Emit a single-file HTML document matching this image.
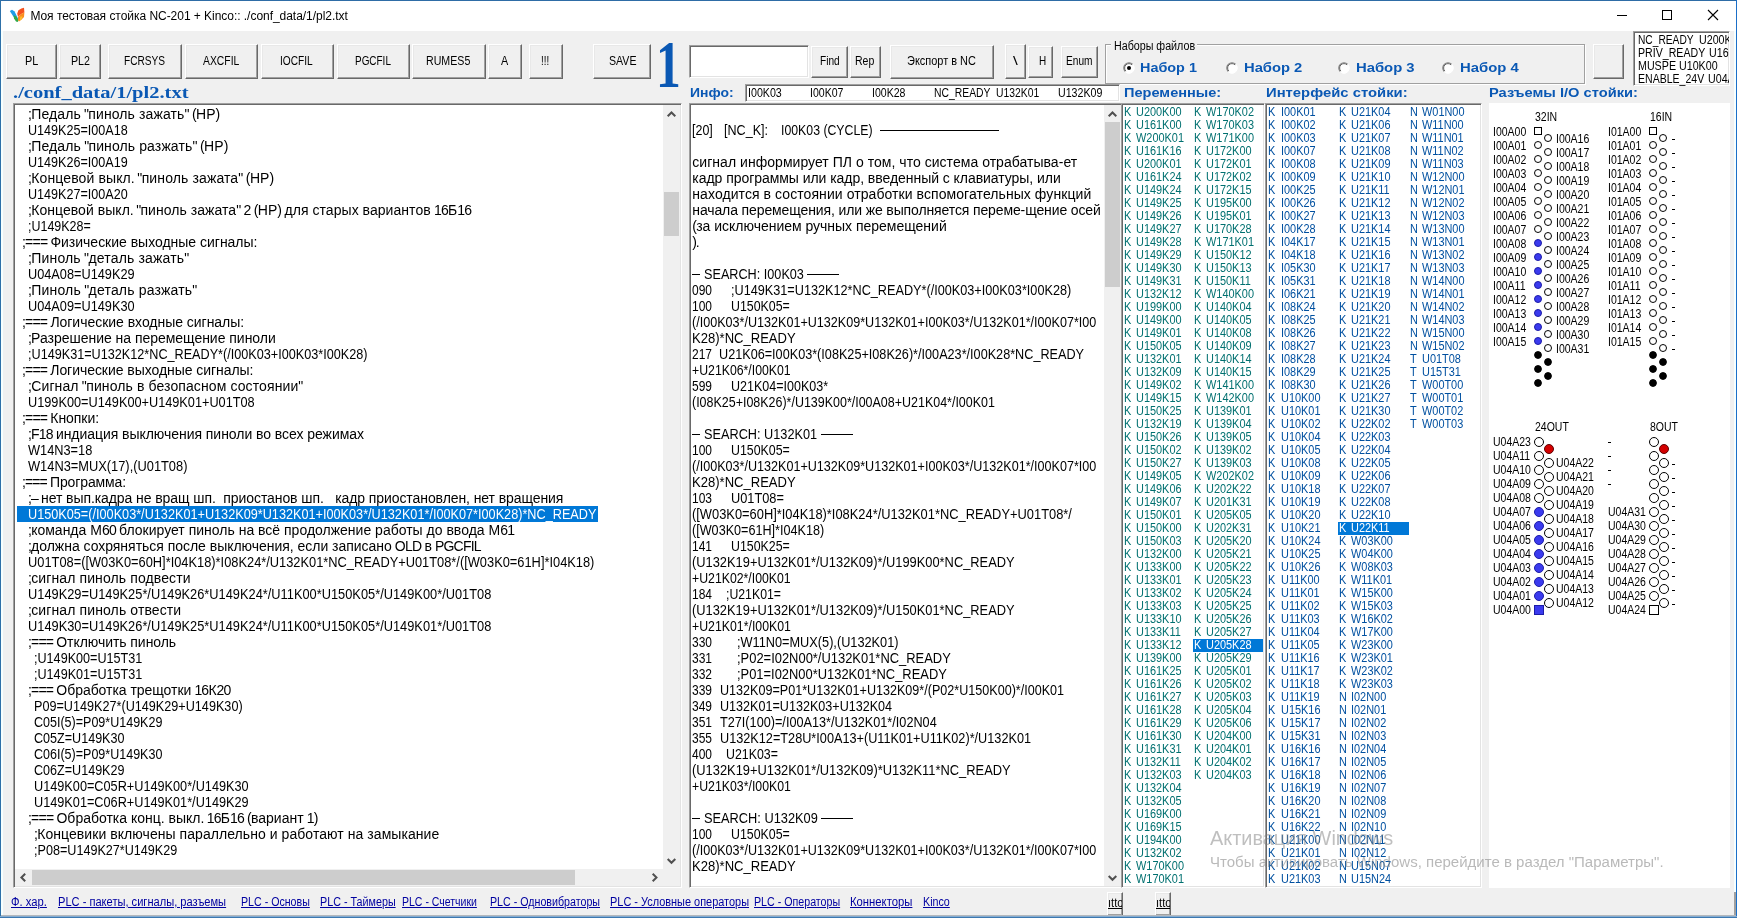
<!DOCTYPE html>
<html lang="ru"><head><meta charset="utf-8"><title>NC-201</title>
<style>
*{box-sizing:border-box;margin:0;padding:0}
html,body{width:1737px;height:919px;overflow:hidden;background:#f0f0f0}
body{position:relative;font-family:"Liberation Sans",sans-serif;font-size:13px;color:#000;
  will-change:transform}
.abs{position:absolute}
#frame{position:absolute;left:0;top:0;width:1737px;height:919px;pointer-events:none;z-index:50}
#titlebar{position:absolute;left:1px;top:1px;width:1735px;height:30px;background:#fff}
.btn{position:absolute;background:#f0f0f0;border:1px solid;border-color:#fff #696969 #696969 #fff;box-shadow:inset -1px -1px 0 #a0a0a0,inset 1px 1px 0 #e8e8e8}
.sunk{position:absolute;background:#fff;border:1px solid;border-color:#a0a0a0 #fff #fff #a0a0a0;box-shadow:inset 1px 1px 0 #696969,inset -1px -1px 0 #e3e3e3}
.blue{color:#0a58b4}
.tx{position:absolute;white-space:pre}
.t{letter-spacing:calc(var(--l,0px) + var(--d,0px))}
.t i{font-style:normal;letter-spacing:calc(var(--c,0px) + var(--d,0px))}
.sx{display:inline-block;transform-origin:0 0;transform:scaleX(var(--s,.89));letter-spacing:0}
.p14{font-size:14px;line-height:16px;height:16px;--l:-.76px;--c:0px}
.p12{font-size:12px;line-height:13px;height:13px;--l:-.8px;--c:-.1px}
.hdr{font-weight:bold;font-size:13.5px;line-height:16px;color:#0a58b4;--s:1.1}
.ttl{font-size:12px;line-height:16px}
.sel{background:#0078d7;color:#fff}
.lk{color:#0000a0}
.lk span{text-decoration:underline}
</style></head>
<body>
<div id="titlebar"></div>
<svg class="abs" style="left:0;top:0" width="32" height="30" viewBox="0 0 32 30">
<path d="M9.8 11 L12 9.8 L14.6 11.6 L18 18.5 L16.8 21 L14 17.5 Z" fill="#1e9be6"/>
<path d="M13.6 15.2 L16.4 16.6 L18.6 20.6 L17.6 21.9 L16 21.6 L14 18.6 Z" fill="#2fa84a"/>
<path d="M17.2 13.6 L18.4 10.2 L21.4 8.4 L24 7.8 L24.4 12.5 L22.4 13.2 L19.4 15.5 L18 17 Z" fill="#f4511e"/>
<path d="M18 17 L19.4 15.5 L22.4 13.2 L24.4 12.5 L24 17 L21.6 19.6 L19 21.4 L18 20 Z" fill="#fb8c1e"/>
<path d="M20.4 16.4 L22.6 16.6 L21.4 19.6 L19.6 20.8 Z" fill="#fdc02f"/>
</svg>
<div class="tx ttl" style="left:30.4px;top:8px;"><span id="title" class="t" style="--d:-0.036px"><i>Моя тестовая стойка</i> NC-201 + Kinco:: ./conf_data/1/pl2.txt</span></div>
<svg class="abs" style="left:1600px;top:1px" width="136" height="30" viewBox="0 0 136 30" shape-rendering="crispEdges">
<rect x="17" y="14" width="10" height="1" fill="#000"/>
<rect x="62.5" y="9.5" width="9" height="9" fill="none" stroke="#000" stroke-width="1"/>
<g shape-rendering="auto" stroke="#000" stroke-width="1.1"><path d="M108 9 L118 19 M118 9 L108 19" fill="none"/></g>
</svg>
<div class="btn" style="left:6px;top:44px;width:51px;height:35px"></div>
<div class="tx p12" style="left:25.0px;top:55px;"><span id="B0" class="sx" style="--s:0.9055">PL</span></div>
<div class="btn" style="left:59px;top:44px;width:42px;height:35px"></div>
<div class="tx p12" style="left:70.5px;top:55px;"><span id="B1" class="sx" style="--s:0.8895">PL2</span></div>
<div class="btn" style="left:108px;top:44px;width:74px;height:35px"></div>
<div class="tx p12" style="left:124.1px;top:55px;"><span id="B2" class="sx" style="--s:0.8443">FCRSYS</span></div>
<div class="btn" style="left:185px;top:44px;width:73px;height:35px"></div>
<div class="tx p12" style="left:202.7px;top:55px;"><span id="B3" class="sx" style="--s:0.8643">AXCFIL</span></div>
<div class="btn" style="left:261px;top:44px;width:73px;height:35px"></div>
<div class="tx p12" style="left:280.0px;top:55px;"><span id="B4" class="sx" style="--s:0.8456">IOCFIL</span></div>
<div class="btn" style="left:337px;top:44px;width:73px;height:35px"></div>
<div class="tx p12" style="left:354.6px;top:55px;"><span id="B5" class="sx" style="--s:0.8284">PGCFIL</span></div>
<div class="btn" style="left:412px;top:44px;width:74px;height:35px"></div>
<div class="tx p12" style="left:426.4px;top:55px;"><span id="B6" class="sx" style="--s:0.8859">RUMES5</span></div>
<div class="btn" style="left:488px;top:44px;width:34px;height:35px"></div>
<div class="tx p12" style="left:501.0px;top:55px;"><span id="B7" class="sx" style="--s:0.8982">A</span></div>
<div class="btn" style="left:529px;top:44px;width:34px;height:35px"></div>
<div class="tx p12" style="left:541.2px;top:55px;"><span id="B8" class="sx" style="--s:0.8100">!!!</span></div>
<div class="btn" style="left:593px;top:44px;width:58px;height:35px"></div>
<div class="tx p12" style="left:608.5px;top:55px;"><span id="B9" class="sx" style="--s:0.8835">SAVE</span></div>
<div class="btn" style="left:811px;top:46px;width:37px;height:32px"></div>
<div class="tx p12" style="left:819.7px;top:55px;"><span id="B10" class="sx" style="--s:0.8444">Find</span></div>
<div class="btn" style="left:850px;top:46px;width:31px;height:32px"></div>
<div class="tx p12" style="left:854.7px;top:55px;"><span id="B11" class="sx" style="--s:0.8772">Rep</span></div>
<div class="btn" style="left:890px;top:45px;width:104px;height:34px"></div>
<div class="tx p12" style="left:906.7px;top:55px;"><span id="B12" class="sx" style="--s:0.9131">Экспорт в NC</span></div>
<div class="btn" style="left:1004.5px;top:44px;width:21.5px;height:35px"></div>
<div class="tx p12" style="left:1012.7px;top:55px;"><span id="B13" class="sx" style="--s:1.4393">\</span></div>
<div class="btn" style="left:1028.4px;top:46px;width:24.59999999999991px;height:32px"></div>
<div class="tx p12" style="left:1038.5px;top:55px;"><span id="B14" class="sx" style="--s:0.8303">H</span></div>
<div class="btn" style="left:1060.6px;top:46px;width:37.200000000000045px;height:32px"></div>
<div class="tx p12" style="left:1065.5px;top:55px;"><span id="B15" class="sx" style="--s:0.8450">Enum</span></div>
<div class="btn" style="left:1593px;top:44px;width:31px;height:35px"></div>
<div class="abs" style="left:655.5px;top:30.5px;font-family:'Liberation Serif',serif;font-weight:bold;font-size:67px;line-height:67px;color:#0a58b4;transform:scaleX(.74);transform-origin:0 0">1</div>
<div class="sunk" style="left:689px;top:45px;width:120px;height:33px"></div>
<div class="abs" style="left:1105px;top:44px;width:480px;height:40px;border:1px solid #a0a0a0;box-shadow:1px 1px 0 #fff, 1px 1px 0 #fff inset"></div>
<div class="abs" style="left:1111px;top:40px;width:86px;height:13px;background:#f0f0f0"></div>
<div class="tx p12" style="left:1113.5px;top:40px;"><span id="grp" class="sx" style="--s:0.8915">Наборы файлов</span></div>
<svg class="abs" style="left:1122.5px;top:62px" width="12" height="12" viewBox="0 0 12 12"><circle cx="6" cy="6" r="5.4" fill="#fff"/><path d="M2.3 9.7 A5.2 5.2 0 0 1 9.7 2.3" fill="none" stroke="#7c7c7c" stroke-width="1.1"/><path d="M2.9 9.1 A4.3 4.3 0 0 1 9.1 2.9" fill="none" stroke="#5a5a5a" stroke-width=".9"/><path d="M9.7 2.3 A5.2 5.2 0 0 1 2.3 9.7" fill="none" stroke="#fff" stroke-width="1"/><circle cx="6" cy="6" r="2" fill="#000"/></svg>
<div class="tx hdr" style="left:1140.3px;top:60px;"><span id="R0" class="sx" style="--s:1.0664">Набор 1</span></div>
<svg class="abs" style="left:1225.5px;top:62px" width="12" height="12" viewBox="0 0 12 12"><circle cx="6" cy="6" r="5.4" fill="#fff"/><path d="M2.3 9.7 A5.2 5.2 0 0 1 9.7 2.3" fill="none" stroke="#7c7c7c" stroke-width="1.1"/><path d="M2.9 9.1 A4.3 4.3 0 0 1 9.1 2.9" fill="none" stroke="#5a5a5a" stroke-width=".9"/><path d="M9.7 2.3 A5.2 5.2 0 0 1 2.3 9.7" fill="none" stroke="#fff" stroke-width="1"/></svg>
<div class="tx hdr" style="left:1244.1px;top:60px;"><span id="R1" class="sx" style="--s:1.0927">Набор 2</span></div>
<svg class="abs" style="left:1337.5px;top:62px" width="12" height="12" viewBox="0 0 12 12"><circle cx="6" cy="6" r="5.4" fill="#fff"/><path d="M2.3 9.7 A5.2 5.2 0 0 1 9.7 2.3" fill="none" stroke="#7c7c7c" stroke-width="1.1"/><path d="M2.9 9.1 A4.3 4.3 0 0 1 9.1 2.9" fill="none" stroke="#5a5a5a" stroke-width=".9"/><path d="M9.7 2.3 A5.2 5.2 0 0 1 2.3 9.7" fill="none" stroke="#fff" stroke-width="1"/></svg>
<div class="tx hdr" style="left:1356.0px;top:60px;"><span id="R2" class="sx" style="--s:1.0982">Набор 3</span></div>
<svg class="abs" style="left:1441.5px;top:62px" width="12" height="12" viewBox="0 0 12 12"><circle cx="6" cy="6" r="5.4" fill="#fff"/><path d="M2.3 9.7 A5.2 5.2 0 0 1 9.7 2.3" fill="none" stroke="#7c7c7c" stroke-width="1.1"/><path d="M2.9 9.1 A4.3 4.3 0 0 1 9.1 2.9" fill="none" stroke="#5a5a5a" stroke-width=".9"/><path d="M9.7 2.3 A5.2 5.2 0 0 1 2.3 9.7" fill="none" stroke="#fff" stroke-width="1"/></svg>
<div class="tx hdr" style="left:1460.1px;top:60px;"><span id="R3" class="sx" style="--s:1.1002">Набор 4</span></div>
<div class="sunk" style="left:1633px;top:31px;width:97px;height:55px"></div>
<div class="abs" style="left:1635px;top:33px;width:93.5px;height:53px;overflow:hidden">
<div class="tx p12" style="left:2.7000000000000455px;top:1px;"><span id="tr0" class="sx" style="--s:0.8509">NC_READY</span></div>
<div class="tx p12" style="left:63.700000000000045px;top:1px;"><span id="tq0" class="sx">U200K00</span></div>
<div class="tx p12" style="left:2.7000000000000455px;top:14px;"><span id="tr1" class="sx" style="--s:0.8840">PRIV_READY</span></div>
<div class="tx p12" style="left:73.5px;top:14px;"><span id="tq1" class="sx">U160K00</span></div>
<div class="tx p12" style="left:2.7000000000000455px;top:27px;"><span id="tr2" class="sx" style="--s:0.8908">MUSPE U10K00</span></div>
<div class="tx p12" style="left:2.7000000000000455px;top:40px;"><span id="tr3" class="sx" style="--s:0.8783">ENABLE_24V</span></div>
<div class="tx p12" style="left:73.0px;top:40px;"><span id="tq3" class="sx">U04A23</span></div>
</div>
<div class="abs" style="left:12.7px;top:81.5px;font-family:'Liberation Serif',serif;font-weight:bold;font-size:16px;line-height:22px;color:#0a58b4;white-space:pre"><span id="fpath" class="sx" style="--s:1.2821">./conf_data/1/pl2.txt</span></div>
<div class="tx hdr" style="left:689.8px;top:85px;"><span id="h0" class="sx" style="--s:1.0324">Инфо:</span></div>
<div class="sunk" style="left:745px;top:84px;width:375px;height:18px"></div>
<div class="tx p12" style="left:748px;top:87px;"><span id="inf0" class="sx" style="--s:0.8884">I00K03</span></div>
<div class="tx p12" style="left:810px;top:87px;"><span id="inf1" class="sx" style="--s:0.8779">I00K07</span></div>
<div class="tx p12" style="left:872px;top:87px;"><span id="inf2" class="sx" style="--s:0.8805">I00K28</span></div>
<div class="tx p12" style="left:934px;top:87px;"><span id="inf3" class="sx" style="--s:0.8645">NC_READY</span></div>
<div class="tx p12" style="left:995.8px;top:87px;"><span id="inf4" class="sx" style="--s:0.8633">U132K01</span></div>
<div class="tx p12" style="left:1057.8px;top:87px;"><span id="inf5" class="sx" style="--s:0.8872">U132K09</span></div>
<div class="tx hdr" style="left:1123.8px;top:85px;"><span id="h1" class="sx" style="--s:1.0785">Переменные:</span></div>
<div class="tx hdr" style="left:1265.7px;top:85px;"><span id="h2" class="sx" style="--s:1.0980">Интерфейс стойки:</span></div>
<div class="tx hdr" style="left:1489.4px;top:85px;"><span id="h3" class="sx" style="--s:1.0861">Разъемы I/O стойки:</span></div>
<div class="sunk" style="left:13px;top:103px;width:669px;height:785px"></div>
<div class="tx p14" style="left:28px;top:106px;"><span id="L0" class="t" style="--d:0.100px">;<i>Педаль</i> "<i>пиноль зажать</i>" (<i>НР</i>)</span></div>
<div class="tx p14" style="left:28px;top:122px;"><span id="L1" class="sx" style="--s:0.8987">U149K25=I00A18</span></div>
<div class="tx p14" style="left:28px;top:138px;"><span id="L2" class="t" style="--d:0.113px">;<i>Педаль</i> "<i>пиноль разжать</i>" (<i>НР</i>)</span></div>
<div class="tx p14" style="left:28px;top:154px;"><span id="L3" class="sx" style="--s:0.8987">U149K26=I00A19</span></div>
<div class="tx p14" style="left:28px;top:170px;"><span id="L4" class="t" style="--d:0.118px">;<i>Концевой выкл</i>. "<i>пиноль зажата</i>" (<i>НР</i>)</span></div>
<div class="tx p14" style="left:28px;top:186px;"><span id="L5" class="sx" style="--s:0.8987">U149K27=I00A20</span></div>
<div class="tx p14" style="left:28px;top:202px;"><span id="L6" class="t" style="--d:0.048px">;<i>Концевой выкл</i>. "<i>пиноль зажата</i>" 2 (<i>НР</i>) <i>для старых вариантов</i> 16<i>Б</i>16</span></div>
<div class="tx p14" style="left:28px;top:218px;"><span id="L7" class="sx" style="--s:0.8900">;U149K28=</span></div>
<div class="tx p14" style="left:22px;top:234px;"><span id="L8" class="t" style="--d:-0.015px">;=== <i>Физические выходные сигналы</i>:</span></div>
<div class="tx p14" style="left:28px;top:250px;"><span id="L9" class="t" style="--d:0.161px">;<i>Пиноль</i> "<i>деталь зажать</i>"</span></div>
<div class="tx p14" style="left:28px;top:266px;"><span id="L10" class="sx" style="--s:0.9099">U04A08=U149K29</span></div>
<div class="tx p14" style="left:28px;top:282px;"><span id="L11" class="t" style="--d:0.174px">;<i>Пиноль</i> "<i>деталь разжать</i>"</span></div>
<div class="tx p14" style="left:28px;top:298px;"><span id="L12" class="sx" style="--s:0.9099">U04A09=U149K30</span></div>
<div class="tx p14" style="left:22px;top:314px;"><span id="L13" class="t" style="--d:-0.029px">;=== <i>Логические входные сигналы</i>:</span></div>
<div class="tx p14" style="left:28px;top:330px;"><span id="L14" class="t" style="--d:-0.027px">;<i>Разрешение на перемещение пиноли</i></span></div>
<div class="tx p14" style="left:28px;top:346px;"><span id="L15" class="sx" style="--s:0.9031">;U149K31=U132K12*NC_READY*(/I00K03+I00K03*I00K28)</span></div>
<div class="tx p14" style="left:22px;top:362px;"><span id="L16" class="t" style="--d:-0.052px">;=== <i>Логические выходные сигналы</i>:</span></div>
<div class="tx p14" style="left:28px;top:378px;"><span id="L17" class="t" style="--d:0.108px">;<i>Сигнал</i> "<i>пиноль в безопасном состоянии</i>"</span></div>
<div class="tx p14" style="left:28px;top:394px;"><span id="L18" class="sx" style="--s:0.9087">U199K00=U149K00+U149K01+U01T08</span></div>
<div class="tx p14" style="left:22px;top:410px;"><span id="L19" class="t" style="--d:-0.047px">;=== <i>Кнопки</i>:</span></div>
<div class="tx p14" style="left:28px;top:426px;"><span id="L20" class="t" style="--d:-0.046px">;F18 <i>индиация выключения пиноли во всех режимах</i></span></div>
<div class="tx p14" style="left:28px;top:442px;"><span id="L21" class="sx" style="--s:0.9129">W14N3=18</span></div>
<div class="tx p14" style="left:28px;top:458px;"><span id="L22" class="sx" style="--s:0.9167">W14N3=MUX(17),(U01T08)</span></div>
<div class="tx p14" style="left:22px;top:474px;"><span id="L23" class="t" style="--d:-0.114px">;=== <i>Программа</i>:</span></div>
<div class="tx p14" style="left:28px;top:490px;"><span id="L24" class="t" style="--d:-0.082px">;– <i>нет вып.кадра не вращ шп.  приостанов шп.   кадр приостановлен, нет вращения</i></span></div>
<div class="abs sel" style="left:17px;top:506px;width:581px;height:16px"></div>
<div class="tx p14" style="left:28px;top:506px;color:#fff;"><span id="L25" class="sx" style="--s:0.9055">U150K05=(/I00K03*/U132K01+U132K09*U132K01+I00K03*/U132K01*/I00K07*I00K28)*NC_READY</span></div>
<div class="tx p14" style="left:28px;top:522px;"><span id="L26" class="t" style="--d:0.003px">;<i>команда М</i>60 <i>блокирует пиноль на всё продолжение работы до ввода М</i>61</span></div>
<div class="tx p14" style="left:28px;top:538px;"><span id="L27" class="t" style="--d:-0.027px">;<i>должна сохряняться после выключения, если записано</i> OLD <i>в</i> PGCFIL</span></div>
<div class="tx p14" style="left:28px;top:554px;"><span id="L28" class="sx" style="--s:0.9166">U01T08=([W03K0=60H]*I04K18)*I08K24*/U132K01*NC_READY+U01T08*/([W03K0=61H]*I04K18)</span></div>
<div class="tx p14" style="left:28px;top:570px;"><span id="L29" class="t" style="--d:0.107px">;<i>сигнал пиноль подвести</i></span></div>
<div class="tx p14" style="left:28px;top:586px;"><span id="L30" class="sx" style="--s:0.9155">U149K29=U149K25*/U149K26*U149K24*/U11K00*U150K05*/U149K00*/U01T08</span></div>
<div class="tx p14" style="left:28px;top:602px;"><span id="L31" class="t" style="--d:0.114px">;<i>сигнал пиноль отвести</i></span></div>
<div class="tx p14" style="left:28px;top:618px;"><span id="L32" class="sx" style="--s:0.9155">U149K30=U149K26*/U149K25*U149K24*/U11K00*U150K05*/U149K01*/U01T08</span></div>
<div class="tx p14" style="left:28px;top:634px;"><span id="L33" class="t" style="--d:-0.055px">;=== <i>Отключить пиноль</i></span></div>
<div class="tx p14" style="left:34px;top:650px;"><span id="L34" class="sx" style="--s:0.9005">;U149K00=U15T31</span></div>
<div class="tx p14" style="left:34px;top:666px;"><span id="L35" class="sx" style="--s:0.9005">;U149K01=U15T31</span></div>
<div class="tx p14" style="left:28px;top:682px;"><span id="L36" class="t" style="--d:-0.039px">;=== <i>Обработка трещотки</i> 16<i>К</i>20</span></div>
<div class="tx p14" style="left:34px;top:698px;"><span id="L37" class="sx" style="--s:0.9024">P09=U149K27*(U149K29+U149K30)</span></div>
<div class="tx p14" style="left:34px;top:714px;"><span id="L38" class="sx" style="--s:0.8941">C05I(5)=P09*U149K29</span></div>
<div class="tx p14" style="left:34px;top:730px;"><span id="L39" class="sx" style="--s:0.8978">C05Z=U149K30</span></div>
<div class="tx p14" style="left:34px;top:746px;"><span id="L40" class="sx" style="--s:0.8941">C06I(5)=P09*U149K30</span></div>
<div class="tx p14" style="left:34px;top:762px;"><span id="L41" class="sx" style="--s:0.8978">C06Z=U149K29</span></div>
<div class="tx p14" style="left:34px;top:778px;"><span id="L42" class="sx" style="--s:0.9069">U149K00=C05R+U149K00*/U149K30</span></div>
<div class="tx p14" style="left:34px;top:794px;"><span id="L43" class="sx" style="--s:0.9069">U149K01=C06R+U149K01*/U149K29</span></div>
<div class="tx p14" style="left:28px;top:810px;"><span id="L44" class="t" style="--d:-0.005px">;=== <i>Обработка конц. выкл</i>. 16<i>Б</i>16 (<i>вариант</i> 1)</span></div>
<div class="tx p14" style="left:34px;top:826px;"><span id="L45" class="t" style="--d:0.059px">;<i>Концевики включены параллельно и работают на замыкание</i></span></div>
<div class="tx p14" style="left:34px;top:842px;"><span id="L46" class="sx" style="--s:0.9002">;P08=U149K27*U149K29</span></div>
<div class="abs" style="left:663px;top:105px;width:17px;height:764px;background:#f0f0f0"></div>
<div class="abs" style="left:664px;top:192px;width:15px;height:44px;background:#cdcdcd"></div>
<svg class="abs" style="left:663px;top:105px" width="17" height="17" viewBox="0 0 17 17"><path d="M4.7 11.3 L8.5 7.5 L12.3 11.3" fill="none" stroke="#505050" stroke-width="2"/></svg>
<svg class="abs" style="left:663px;top:852px" width="17" height="17" viewBox="0 0 17 17"><path d="M4.7 7 L8.5 10.8 L12.3 7" fill="none" stroke="#505050" stroke-width="2"/></svg>
<div class="abs" style="left:15px;top:869px;width:665px;height:17px;background:#f0f0f0"></div>
<div class="abs" style="left:32px;top:870px;width:543px;height:15px;background:#cdcdcd"></div>
<svg class="abs" style="left:15px;top:869px" width="17" height="17" viewBox="0 0 17 17"><path d="M10.2 4.7 L6.4 8.5 L10.2 12.3" fill="none" stroke="#505050" stroke-width="2"/></svg>
<svg class="abs" style="left:646px;top:869px" width="17" height="17" viewBox="0 0 17 17"><path d="M6.7 4.7 L10.5 8.5 L6.7 12.3" fill="none" stroke="#505050" stroke-width="2"/></svg>
<div class="sunk" style="left:689px;top:103px;width:433px;height:785px"></div>
<div class="tx p14" style="left:692.3px;top:122px;"><span id="M1p" class="sx">[20]</span></div>
<div class="tx p14" style="left:723.5px;top:122px;"><span id="M1" class="sx" style="--s:0.8977">[NC_K]:</span></div>
<div class="tx p14" style="left:780.8px;top:122px;"><span id="M1b" class="sx" style="--s:0.8784">I00K03 (CYCLE)</span></div>
<div class="abs" style="left:880px;top:130px;width:119px;height:1px;background:#000"></div>
<div class="tx p14" style="left:692.3px;top:154px;"><span id="M3" class="t" style="--d:0.037px"><i>сигнал информирует ПЛ о том, что система отрабатыва-ет</i></span></div>
<div class="tx p14" style="left:692.3px;top:170px;"><span id="M4" class="t" style="--d:-0.047px"><i>кадр программы или кадр, введенный с клавиатуры, или</i></span></div>
<div class="tx p14" style="left:692.3px;top:186px;"><span id="M5" class="t" style="--d:0.075px"><i>находится в состоянии отработки вспомогательных функций</i></span></div>
<div class="tx p14" style="left:692.3px;top:202px;"><span id="M6" class="t" style="--d:-0.120px"><i>начала перемещения, или же выполняется переме-щение осей</i></span></div>
<div class="tx p14" style="left:692.3px;top:218px;"><span id="M7" class="t" style="--d:-0.014px">(<i>за исключением ручных перемещений</i></span></div>
<div class="tx p14" style="left:692.3px;top:234px;"><span id="M8" class="t" style="--d:-0.570px">).</span></div>
<div class="abs" style="left:692px;top:274px;width:8px;height:1px;background:#000"></div>
<div class="tx p14" style="left:703.5px;top:266px;"><span id="M10" class="sx" style="--s:0.9041">SEARCH: I00K03</span></div>
<div class="abs" style="left:807px;top:274px;width:32px;height:1px;background:#000"></div>
<div class="tx p14" style="left:692.3px;top:282px;"><span id="M11p" class="sx" style="--s:0.8563">090</span></div>
<div class="tx p14" style="left:730.5px;top:282px;"><span id="M11" class="sx" style="--s:0.9050">;U149K31=U132K12*NC_READY*(/I00K03+I00K03*I00K28)</span></div>
<div class="tx p14" style="left:692.3px;top:298px;"><span id="M12p" class="sx" style="--s:0.8563">100</span></div>
<div class="tx p14" style="left:731.4px;top:298px;"><span id="M12" class="sx" style="--s:0.8835">U150K05=</span></div>
<div class="tx p14" style="left:692.3px;top:314px;"><span id="M13" class="sx" style="--s:0.8986">(/I00K03*/U132K01+U132K09*U132K01+I00K03*/U132K01*/I00K07*I00</span></div>
<div class="tx p14" style="left:692.3px;top:330px;"><span id="M14" class="sx" style="--s:0.9320">K28)*NC_READY</span></div>
<div class="tx p14" style="left:692.3px;top:346px;"><span id="M15p" class="sx" style="--s:0.8563">217</span></div>
<div class="tx p14" style="left:719.0px;top:346px;"><span id="M15" class="sx" style="--s:0.9036">U21K06=I00K03*(I08K25+I08K26)*/I00A23*/I00K28*NC_READY</span></div>
<div class="tx p14" style="left:692.3px;top:362px;"><span id="M16" class="sx" style="--s:0.8775">+U21K06*/I00K01</span></div>
<div class="tx p14" style="left:692.3px;top:378px;"><span id="M17p" class="sx" style="--s:0.8563">599</span></div>
<div class="tx p14" style="left:731.4px;top:378px;"><span id="M17" class="sx" style="--s:0.8933">U21K04=I00K03*</span></div>
<div class="tx p14" style="left:692.3px;top:394px;"><span id="M18" class="sx" style="--s:0.8905">(I08K25+I08K26)*/U139K00*/I00A08+U21K04*/I00K01</span></div>
<div class="abs" style="left:692px;top:434px;width:8px;height:1px;background:#000"></div>
<div class="tx p14" style="left:703.5px;top:426px;"><span id="M20" class="sx" style="--s:0.9083">SEARCH: U132K01</span></div>
<div class="abs" style="left:821px;top:434px;width:32px;height:1px;background:#000"></div>
<div class="tx p14" style="left:692.3px;top:442px;"><span id="M21p" class="sx" style="--s:0.8563">100</span></div>
<div class="tx p14" style="left:731.4px;top:442px;"><span id="M21" class="sx" style="--s:0.8835">U150K05=</span></div>
<div class="tx p14" style="left:692.3px;top:458px;"><span id="M22" class="sx" style="--s:0.8986">(/I00K03*/U132K01+U132K09*U132K01+I00K03*/U132K01*/I00K07*I00</span></div>
<div class="tx p14" style="left:692.3px;top:474px;"><span id="M23" class="sx" style="--s:0.9320">K28)*NC_READY</span></div>
<div class="tx p14" style="left:692.3px;top:490px;"><span id="M24p" class="sx" style="--s:0.8563">103</span></div>
<div class="tx p14" style="left:731.4px;top:490px;"><span id="M24" class="sx" style="--s:0.9125">U01T08=</span></div>
<div class="tx p14" style="left:692.3px;top:506px;"><span id="M25" class="sx" style="--s:0.9193">([W03K0=60H]*I04K18)*I08K24*/U132K01*NC_READY+U01T08*/</span></div>
<div class="tx p14" style="left:692.3px;top:522px;"><span id="M26" class="sx" style="--s:0.9012">([W03K0=61H]*I04K18)</span></div>
<div class="tx p14" style="left:692.3px;top:538px;"><span id="M27p" class="sx" style="--s:0.8563">141</span></div>
<div class="tx p14" style="left:731.4px;top:538px;"><span id="M27" class="sx" style="--s:0.8835">U150K25=</span></div>
<div class="tx p14" style="left:692.3px;top:554px;"><span id="M28" class="sx" style="--s:0.9181">(U132K19+U132K01*/U132K09)*/U199K00*NC_READY</span></div>
<div class="tx p14" style="left:692.3px;top:570px;"><span id="M29" class="sx" style="--s:0.8775">+U21K02*/I00K01</span></div>
<div class="tx p14" style="left:692.3px;top:586px;"><span id="M30p" class="sx" style="--s:0.8563">184</span></div>
<div class="tx p14" style="left:725.5px;top:586px;"><span id="M30" class="sx" style="--s:0.8776">;U21K01=</span></div>
<div class="tx p14" style="left:692.3px;top:602px;"><span id="M31" class="sx" style="--s:0.9181">(U132K19+U132K01*/U132K09)*/U150K01*NC_READY</span></div>
<div class="tx p14" style="left:692.3px;top:618px;"><span id="M32" class="sx" style="--s:0.8793">+U21K01*/I00K01</span></div>
<div class="tx p14" style="left:692.3px;top:634px;"><span id="M33p" class="sx" style="--s:0.8563">330</span></div>
<div class="tx p14" style="left:736.9px;top:634px;"><span id="M33" class="sx" style="--s:0.9098">;W11N0=MUX(5),(U132K01)</span></div>
<div class="tx p14" style="left:692.3px;top:650px;"><span id="M34p" class="sx" style="--s:0.8563">331</span></div>
<div class="tx p14" style="left:736.9px;top:650px;"><span id="M34" class="sx" style="--s:0.9235">;P02=I02N00*/U132K01*NC_READY</span></div>
<div class="tx p14" style="left:692.3px;top:666px;"><span id="M35p" class="sx" style="--s:0.8563">332</span></div>
<div class="tx p14" style="left:736.9px;top:666px;"><span id="M35" class="sx" style="--s:0.9217">;P01=I02N00*U132K01*NC_READY</span></div>
<div class="tx p14" style="left:692.3px;top:682px;"><span id="M36p" class="sx" style="--s:0.8563">339</span></div>
<div class="tx p14" style="left:719.7px;top:682px;"><span id="M36" class="sx" style="--s:0.8985">U132K09=P01*U132K01+U132K09*/(P02*U150K00)*/I00K01</span></div>
<div class="tx p14" style="left:692.3px;top:698px;"><span id="M37p" class="sx" style="--s:0.8563">349</span></div>
<div class="tx p14" style="left:719.7px;top:698px;"><span id="M37" class="sx" style="--s:0.8988">U132K01=U132K03+U132K04</span></div>
<div class="tx p14" style="left:692.3px;top:714px;"><span id="M38p" class="sx" style="--s:0.8563">351</span></div>
<div class="tx p14" style="left:719.7px;top:714px;"><span id="M38" class="sx" style="--s:0.9054">T27I(100)=/I00A13*/U132K01*/I02N04</span></div>
<div class="tx p14" style="left:692.3px;top:730px;"><span id="M39p" class="sx" style="--s:0.8563">355</span></div>
<div class="tx p14" style="left:719.7px;top:730px;"><span id="M39" class="sx" style="--s:0.9065">U132K12=T28U*I00A13+(U11K01+U11K02)*/U132K01</span></div>
<div class="tx p14" style="left:692.3px;top:746px;"><span id="M40p" class="sx" style="--s:0.8563">400</span></div>
<div class="tx p14" style="left:725.7px;top:746px;"><span id="M40" class="sx" style="--s:0.8831">U21K03=</span></div>
<div class="tx p14" style="left:692.3px;top:762px;"><span id="M41" class="sx" style="--s:0.9196">(U132K19+U132K01*/U132K09)*U132K11*NC_READY</span></div>
<div class="tx p14" style="left:692.3px;top:778px;"><span id="M42" class="sx" style="--s:0.8793">+U21K03*/I00K01</span></div>
<div class="abs" style="left:692px;top:818px;width:8px;height:1px;background:#000"></div>
<div class="tx p14" style="left:703.5px;top:810px;"><span id="M44" class="sx" style="--s:0.9139">SEARCH: U132K09</span></div>
<div class="abs" style="left:821px;top:818px;width:32px;height:1px;background:#000"></div>
<div class="tx p14" style="left:692.3px;top:826px;"><span id="M45p" class="sx" style="--s:0.8563">100</span></div>
<div class="tx p14" style="left:731.4px;top:826px;"><span id="M45" class="sx" style="--s:0.8835">U150K05=</span></div>
<div class="tx p14" style="left:692.3px;top:842px;"><span id="M46" class="sx" style="--s:0.8986">(/I00K03*/U132K01+U132K09*U132K01+I00K03*/U132K01*/I00K07*I00</span></div>
<div class="tx p14" style="left:692.3px;top:858px;"><span id="M47" class="sx" style="--s:0.9320">K28)*NC_READY</span></div>
<div class="abs" style="left:1104px;top:105px;width:17px;height:781px;background:#f0f0f0"></div>
<div class="abs" style="left:1105px;top:122px;width:15px;height:165px;background:#cdcdcd"></div>
<svg class="abs" style="left:1104px;top:105px" width="17" height="17" viewBox="0 0 17 17"><path d="M4.7 11.3 L8.5 7.5 L12.3 11.3" fill="none" stroke="#505050" stroke-width="2"/></svg>
<svg class="abs" style="left:1104px;top:869px" width="17" height="17" viewBox="0 0 17 17"><path d="M4.7 7 L8.5 10.8 L12.3 7" fill="none" stroke="#505050" stroke-width="2"/></svg>
<div class="sunk" style="left:1121px;top:103px;width:144px;height:785px"></div>
<div class="p12" style="color:#007070;--s:.91"><div class="tx sx" style="left:1124px;top:106px">K</div><div class="tx sx" style="left:1136px;top:106px">U200K00</div><div class="tx sx" style="left:1124px;top:119px">K</div><div class="tx sx" style="left:1136px;top:119px">U161K00</div><div class="tx sx" style="left:1124px;top:132px">K</div><div class="tx sx" style="left:1136px;top:132px">W200K01</div><div class="tx sx" style="left:1124px;top:145px">K</div><div class="tx sx" style="left:1136px;top:145px">U161K16</div><div class="tx sx" style="left:1124px;top:158px">K</div><div class="tx sx" style="left:1136px;top:158px">U200K01</div><div class="tx sx" style="left:1124px;top:171px">K</div><div class="tx sx" style="left:1136px;top:171px">U161K24</div><div class="tx sx" style="left:1124px;top:184px">K</div><div class="tx sx" style="left:1136px;top:184px">U149K24</div><div class="tx sx" style="left:1124px;top:197px">K</div><div class="tx sx" style="left:1136px;top:197px">U149K25</div><div class="tx sx" style="left:1124px;top:210px">K</div><div class="tx sx" style="left:1136px;top:210px">U149K26</div><div class="tx sx" style="left:1124px;top:223px">K</div><div class="tx sx" style="left:1136px;top:223px">U149K27</div><div class="tx sx" style="left:1124px;top:236px">K</div><div class="tx sx" style="left:1136px;top:236px">U149K28</div><div class="tx sx" style="left:1124px;top:249px">K</div><div class="tx sx" style="left:1136px;top:249px">U149K29</div><div class="tx sx" style="left:1124px;top:262px">K</div><div class="tx sx" style="left:1136px;top:262px">U149K30</div><div class="tx sx" style="left:1124px;top:275px">K</div><div class="tx sx" style="left:1136px;top:275px">U149K31</div><div class="tx sx" style="left:1124px;top:288px">K</div><div class="tx sx" style="left:1136px;top:288px">U132K12</div><div class="tx sx" style="left:1124px;top:301px">K</div><div class="tx sx" style="left:1136px;top:301px">U199K00</div><div class="tx sx" style="left:1124px;top:314px">K</div><div class="tx sx" style="left:1136px;top:314px">U149K00</div><div class="tx sx" style="left:1124px;top:327px">K</div><div class="tx sx" style="left:1136px;top:327px">U149K01</div><div class="tx sx" style="left:1124px;top:340px">K</div><div class="tx sx" style="left:1136px;top:340px">U150K05</div><div class="tx sx" style="left:1124px;top:353px">K</div><div class="tx sx" style="left:1136px;top:353px">U132K01</div><div class="tx sx" style="left:1124px;top:366px">K</div><div class="tx sx" style="left:1136px;top:366px">U132K09</div><div class="tx sx" style="left:1124px;top:379px">K</div><div class="tx sx" style="left:1136px;top:379px">U149K02</div><div class="tx sx" style="left:1124px;top:392px">K</div><div class="tx sx" style="left:1136px;top:392px">U149K15</div><div class="tx sx" style="left:1124px;top:405px">K</div><div class="tx sx" style="left:1136px;top:405px">U150K25</div><div class="tx sx" style="left:1124px;top:418px">K</div><div class="tx sx" style="left:1136px;top:418px">U132K19</div><div class="tx sx" style="left:1124px;top:431px">K</div><div class="tx sx" style="left:1136px;top:431px">U150K26</div><div class="tx sx" style="left:1124px;top:444px">K</div><div class="tx sx" style="left:1136px;top:444px">U150K02</div><div class="tx sx" style="left:1124px;top:457px">K</div><div class="tx sx" style="left:1136px;top:457px">U150K27</div><div class="tx sx" style="left:1124px;top:470px">K</div><div class="tx sx" style="left:1136px;top:470px">U149K05</div><div class="tx sx" style="left:1124px;top:483px">K</div><div class="tx sx" style="left:1136px;top:483px">U149K06</div><div class="tx sx" style="left:1124px;top:496px">K</div><div class="tx sx" style="left:1136px;top:496px">U149K07</div><div class="tx sx" style="left:1124px;top:509px">K</div><div class="tx sx" style="left:1136px;top:509px">U150K01</div><div class="tx sx" style="left:1124px;top:522px">K</div><div class="tx sx" style="left:1136px;top:522px">U150K00</div><div class="tx sx" style="left:1124px;top:535px">K</div><div class="tx sx" style="left:1136px;top:535px">U150K03</div><div class="tx sx" style="left:1124px;top:548px">K</div><div class="tx sx" style="left:1136px;top:548px">U132K00</div><div class="tx sx" style="left:1124px;top:561px">K</div><div class="tx sx" style="left:1136px;top:561px">U133K00</div><div class="tx sx" style="left:1124px;top:574px">K</div><div class="tx sx" style="left:1136px;top:574px">U133K01</div><div class="tx sx" style="left:1124px;top:587px">K</div><div class="tx sx" style="left:1136px;top:587px">U133K02</div><div class="tx sx" style="left:1124px;top:600px">K</div><div class="tx sx" style="left:1136px;top:600px">U133K03</div><div class="tx sx" style="left:1124px;top:613px">K</div><div class="tx sx" style="left:1136px;top:613px">U133K10</div><div class="tx sx" style="left:1124px;top:626px">K</div><div class="tx sx" style="left:1136px;top:626px">U133K11</div><div class="tx sx" style="left:1124px;top:639px">K</div><div class="tx sx" style="left:1136px;top:639px">U133K12</div><div class="tx sx" style="left:1124px;top:652px">K</div><div class="tx sx" style="left:1136px;top:652px">U139K00</div><div class="tx sx" style="left:1124px;top:665px">K</div><div class="tx sx" style="left:1136px;top:665px">U161K25</div><div class="tx sx" style="left:1124px;top:678px">K</div><div class="tx sx" style="left:1136px;top:678px">U161K26</div><div class="tx sx" style="left:1124px;top:691px">K</div><div class="tx sx" style="left:1136px;top:691px">U161K27</div><div class="tx sx" style="left:1124px;top:704px">K</div><div class="tx sx" style="left:1136px;top:704px">U161K28</div><div class="tx sx" style="left:1124px;top:717px">K</div><div class="tx sx" style="left:1136px;top:717px">U161K29</div><div class="tx sx" style="left:1124px;top:730px">K</div><div class="tx sx" style="left:1136px;top:730px">U161K30</div><div class="tx sx" style="left:1124px;top:743px">K</div><div class="tx sx" style="left:1136px;top:743px">U161K31</div><div class="tx sx" style="left:1124px;top:756px">K</div><div class="tx sx" style="left:1136px;top:756px">U132K11</div><div class="tx sx" style="left:1124px;top:769px">K</div><div class="tx sx" style="left:1136px;top:769px">U132K03</div><div class="tx sx" style="left:1124px;top:782px">K</div><div class="tx sx" style="left:1136px;top:782px">U132K04</div><div class="tx sx" style="left:1124px;top:795px">K</div><div class="tx sx" style="left:1136px;top:795px">U132K05</div><div class="tx sx" style="left:1124px;top:808px">K</div><div class="tx sx" style="left:1136px;top:808px">U169K00</div><div class="tx sx" style="left:1124px;top:821px">K</div><div class="tx sx" style="left:1136px;top:821px">U169K15</div><div class="tx sx" style="left:1124px;top:834px">K</div><div class="tx sx" style="left:1136px;top:834px">U194K00</div><div class="tx sx" style="left:1124px;top:847px">K</div><div class="tx sx" style="left:1136px;top:847px">U132K02</div><div class="tx sx" style="left:1124px;top:860px">K</div><div class="tx sx" style="left:1136px;top:860px">W170K00</div><div class="tx sx" style="left:1124px;top:873px">K</div><div class="tx sx" style="left:1136px;top:873px">W170K01</div></div>
<div class="p12" style="color:#007070;--s:.91"><div class="tx sx" style="left:1194px;top:106px">K</div><div class="tx sx" style="left:1206px;top:106px">W170K02</div><div class="tx sx" style="left:1194px;top:119px">K</div><div class="tx sx" style="left:1206px;top:119px">W170K03</div><div class="tx sx" style="left:1194px;top:132px">K</div><div class="tx sx" style="left:1206px;top:132px">W171K00</div><div class="tx sx" style="left:1194px;top:145px">K</div><div class="tx sx" style="left:1206px;top:145px">U172K00</div><div class="tx sx" style="left:1194px;top:158px">K</div><div class="tx sx" style="left:1206px;top:158px">U172K01</div><div class="tx sx" style="left:1194px;top:171px">K</div><div class="tx sx" style="left:1206px;top:171px">U172K02</div><div class="tx sx" style="left:1194px;top:184px">K</div><div class="tx sx" style="left:1206px;top:184px">U172K15</div><div class="tx sx" style="left:1194px;top:197px">K</div><div class="tx sx" style="left:1206px;top:197px">U195K00</div><div class="tx sx" style="left:1194px;top:210px">K</div><div class="tx sx" style="left:1206px;top:210px">U195K01</div><div class="tx sx" style="left:1194px;top:223px">K</div><div class="tx sx" style="left:1206px;top:223px">U170K28</div><div class="tx sx" style="left:1194px;top:236px">K</div><div class="tx sx" style="left:1206px;top:236px">W171K01</div><div class="tx sx" style="left:1194px;top:249px">K</div><div class="tx sx" style="left:1206px;top:249px">U150K12</div><div class="tx sx" style="left:1194px;top:262px">K</div><div class="tx sx" style="left:1206px;top:262px">U150K13</div><div class="tx sx" style="left:1194px;top:275px">K</div><div class="tx sx" style="left:1206px;top:275px">U150K11</div><div class="tx sx" style="left:1194px;top:288px">K</div><div class="tx sx" style="left:1206px;top:288px">W140K00</div><div class="tx sx" style="left:1194px;top:301px">K</div><div class="tx sx" style="left:1206px;top:301px">U140K04</div><div class="tx sx" style="left:1194px;top:314px">K</div><div class="tx sx" style="left:1206px;top:314px">U140K05</div><div class="tx sx" style="left:1194px;top:327px">K</div><div class="tx sx" style="left:1206px;top:327px">U140K08</div><div class="tx sx" style="left:1194px;top:340px">K</div><div class="tx sx" style="left:1206px;top:340px">U140K09</div><div class="tx sx" style="left:1194px;top:353px">K</div><div class="tx sx" style="left:1206px;top:353px">U140K14</div><div class="tx sx" style="left:1194px;top:366px">K</div><div class="tx sx" style="left:1206px;top:366px">U140K15</div><div class="tx sx" style="left:1194px;top:379px">K</div><div class="tx sx" style="left:1206px;top:379px">W141K00</div><div class="tx sx" style="left:1194px;top:392px">K</div><div class="tx sx" style="left:1206px;top:392px">W142K00</div><div class="tx sx" style="left:1194px;top:405px">K</div><div class="tx sx" style="left:1206px;top:405px">U139K01</div><div class="tx sx" style="left:1194px;top:418px">K</div><div class="tx sx" style="left:1206px;top:418px">U139K04</div><div class="tx sx" style="left:1194px;top:431px">K</div><div class="tx sx" style="left:1206px;top:431px">U139K05</div><div class="tx sx" style="left:1194px;top:444px">K</div><div class="tx sx" style="left:1206px;top:444px">U139K02</div><div class="tx sx" style="left:1194px;top:457px">K</div><div class="tx sx" style="left:1206px;top:457px">U139K03</div><div class="tx sx" style="left:1194px;top:470px">K</div><div class="tx sx" style="left:1206px;top:470px">W202K02</div><div class="tx sx" style="left:1194px;top:483px">K</div><div class="tx sx" style="left:1206px;top:483px">U202K22</div><div class="tx sx" style="left:1194px;top:496px">K</div><div class="tx sx" style="left:1206px;top:496px">U201K31</div><div class="tx sx" style="left:1194px;top:509px">K</div><div class="tx sx" style="left:1206px;top:509px">U205K05</div><div class="tx sx" style="left:1194px;top:522px">K</div><div class="tx sx" style="left:1206px;top:522px">U202K31</div><div class="tx sx" style="left:1194px;top:535px">K</div><div class="tx sx" style="left:1206px;top:535px">U205K20</div><div class="tx sx" style="left:1194px;top:548px">K</div><div class="tx sx" style="left:1206px;top:548px">U205K21</div><div class="tx sx" style="left:1194px;top:561px">K</div><div class="tx sx" style="left:1206px;top:561px">U205K22</div><div class="tx sx" style="left:1194px;top:574px">K</div><div class="tx sx" style="left:1206px;top:574px">U205K23</div><div class="tx sx" style="left:1194px;top:587px">K</div><div class="tx sx" style="left:1206px;top:587px">U205K24</div><div class="tx sx" style="left:1194px;top:600px">K</div><div class="tx sx" style="left:1206px;top:600px">U205K25</div><div class="tx sx" style="left:1194px;top:613px">K</div><div class="tx sx" style="left:1206px;top:613px">U205K26</div><div class="tx sx" style="left:1194px;top:626px">K</div><div class="tx sx" style="left:1206px;top:626px">U205K27</div><div class="abs sel" style="left:1193px;top:639px;width:70px;height:13px"></div><div class="tx sx" style="left:1194px;top:639px;color:#fff">K</div><div class="tx sx" style="left:1206px;top:639px;color:#fff">U205K28</div><div class="tx sx" style="left:1194px;top:652px">K</div><div class="tx sx" style="left:1206px;top:652px">U205K29</div><div class="tx sx" style="left:1194px;top:665px">K</div><div class="tx sx" style="left:1206px;top:665px">U205K01</div><div class="tx sx" style="left:1194px;top:678px">K</div><div class="tx sx" style="left:1206px;top:678px">U205K02</div><div class="tx sx" style="left:1194px;top:691px">K</div><div class="tx sx" style="left:1206px;top:691px">U205K03</div><div class="tx sx" style="left:1194px;top:704px">K</div><div class="tx sx" style="left:1206px;top:704px">U205K04</div><div class="tx sx" style="left:1194px;top:717px">K</div><div class="tx sx" style="left:1206px;top:717px">U205K06</div><div class="tx sx" style="left:1194px;top:730px">K</div><div class="tx sx" style="left:1206px;top:730px">U204K00</div><div class="tx sx" style="left:1194px;top:743px">K</div><div class="tx sx" style="left:1206px;top:743px">U204K01</div><div class="tx sx" style="left:1194px;top:756px">K</div><div class="tx sx" style="left:1206px;top:756px">U204K02</div><div class="tx sx" style="left:1194px;top:769px">K</div><div class="tx sx" style="left:1206px;top:769px">U204K03</div></div>
<div class="sunk" style="left:1265px;top:103px;width:217px;height:785px"></div>
<div class="p12" style="color:#0050a0;--s:.91"><div class="tx sx" style="left:1268px;top:106px">K</div><div class="tx sx" style="left:1281px;top:106px">I00K01</div><div class="tx sx" style="left:1268px;top:119px">K</div><div class="tx sx" style="left:1281px;top:119px">I00K02</div><div class="tx sx" style="left:1268px;top:132px">K</div><div class="tx sx" style="left:1281px;top:132px">I00K03</div><div class="tx sx" style="left:1268px;top:145px">K</div><div class="tx sx" style="left:1281px;top:145px">I00K07</div><div class="tx sx" style="left:1268px;top:158px">K</div><div class="tx sx" style="left:1281px;top:158px">I00K08</div><div class="tx sx" style="left:1268px;top:171px">K</div><div class="tx sx" style="left:1281px;top:171px">I00K09</div><div class="tx sx" style="left:1268px;top:184px">K</div><div class="tx sx" style="left:1281px;top:184px">I00K25</div><div class="tx sx" style="left:1268px;top:197px">K</div><div class="tx sx" style="left:1281px;top:197px">I00K26</div><div class="tx sx" style="left:1268px;top:210px">K</div><div class="tx sx" style="left:1281px;top:210px">I00K27</div><div class="tx sx" style="left:1268px;top:223px">K</div><div class="tx sx" style="left:1281px;top:223px">I00K28</div><div class="tx sx" style="left:1268px;top:236px">K</div><div class="tx sx" style="left:1281px;top:236px">I04K17</div><div class="tx sx" style="left:1268px;top:249px">K</div><div class="tx sx" style="left:1281px;top:249px">I04K18</div><div class="tx sx" style="left:1268px;top:262px">K</div><div class="tx sx" style="left:1281px;top:262px">I05K30</div><div class="tx sx" style="left:1268px;top:275px">K</div><div class="tx sx" style="left:1281px;top:275px">I05K31</div><div class="tx sx" style="left:1268px;top:288px">K</div><div class="tx sx" style="left:1281px;top:288px">I06K21</div><div class="tx sx" style="left:1268px;top:301px">K</div><div class="tx sx" style="left:1281px;top:301px">I08K24</div><div class="tx sx" style="left:1268px;top:314px">K</div><div class="tx sx" style="left:1281px;top:314px">I08K25</div><div class="tx sx" style="left:1268px;top:327px">K</div><div class="tx sx" style="left:1281px;top:327px">I08K26</div><div class="tx sx" style="left:1268px;top:340px">K</div><div class="tx sx" style="left:1281px;top:340px">I08K27</div><div class="tx sx" style="left:1268px;top:353px">K</div><div class="tx sx" style="left:1281px;top:353px">I08K28</div><div class="tx sx" style="left:1268px;top:366px">K</div><div class="tx sx" style="left:1281px;top:366px">I08K29</div><div class="tx sx" style="left:1268px;top:379px">K</div><div class="tx sx" style="left:1281px;top:379px">I08K30</div><div class="tx sx" style="left:1268px;top:392px">K</div><div class="tx sx" style="left:1281px;top:392px">U10K00</div><div class="tx sx" style="left:1268px;top:405px">K</div><div class="tx sx" style="left:1281px;top:405px">U10K01</div><div class="tx sx" style="left:1268px;top:418px">K</div><div class="tx sx" style="left:1281px;top:418px">U10K02</div><div class="tx sx" style="left:1268px;top:431px">K</div><div class="tx sx" style="left:1281px;top:431px">U10K04</div><div class="tx sx" style="left:1268px;top:444px">K</div><div class="tx sx" style="left:1281px;top:444px">U10K05</div><div class="tx sx" style="left:1268px;top:457px">K</div><div class="tx sx" style="left:1281px;top:457px">U10K08</div><div class="tx sx" style="left:1268px;top:470px">K</div><div class="tx sx" style="left:1281px;top:470px">U10K09</div><div class="tx sx" style="left:1268px;top:483px">K</div><div class="tx sx" style="left:1281px;top:483px">U10K18</div><div class="tx sx" style="left:1268px;top:496px">K</div><div class="tx sx" style="left:1281px;top:496px">U10K19</div><div class="tx sx" style="left:1268px;top:509px">K</div><div class="tx sx" style="left:1281px;top:509px">U10K20</div><div class="tx sx" style="left:1268px;top:522px">K</div><div class="tx sx" style="left:1281px;top:522px">U10K21</div><div class="tx sx" style="left:1268px;top:535px">K</div><div class="tx sx" style="left:1281px;top:535px">U10K24</div><div class="tx sx" style="left:1268px;top:548px">K</div><div class="tx sx" style="left:1281px;top:548px">U10K25</div><div class="tx sx" style="left:1268px;top:561px">K</div><div class="tx sx" style="left:1281px;top:561px">U10K26</div><div class="tx sx" style="left:1268px;top:574px">K</div><div class="tx sx" style="left:1281px;top:574px">U11K00</div><div class="tx sx" style="left:1268px;top:587px">K</div><div class="tx sx" style="left:1281px;top:587px">U11K01</div><div class="tx sx" style="left:1268px;top:600px">K</div><div class="tx sx" style="left:1281px;top:600px">U11K02</div><div class="tx sx" style="left:1268px;top:613px">K</div><div class="tx sx" style="left:1281px;top:613px">U11K03</div><div class="tx sx" style="left:1268px;top:626px">K</div><div class="tx sx" style="left:1281px;top:626px">U11K04</div><div class="tx sx" style="left:1268px;top:639px">K</div><div class="tx sx" style="left:1281px;top:639px">U11K05</div><div class="tx sx" style="left:1268px;top:652px">K</div><div class="tx sx" style="left:1281px;top:652px">U11K16</div><div class="tx sx" style="left:1268px;top:665px">K</div><div class="tx sx" style="left:1281px;top:665px">U11K17</div><div class="tx sx" style="left:1268px;top:678px">K</div><div class="tx sx" style="left:1281px;top:678px">U11K18</div><div class="tx sx" style="left:1268px;top:691px">K</div><div class="tx sx" style="left:1281px;top:691px">U11K19</div><div class="tx sx" style="left:1268px;top:704px">K</div><div class="tx sx" style="left:1281px;top:704px">U15K16</div><div class="tx sx" style="left:1268px;top:717px">K</div><div class="tx sx" style="left:1281px;top:717px">U15K17</div><div class="tx sx" style="left:1268px;top:730px">K</div><div class="tx sx" style="left:1281px;top:730px">U15K31</div><div class="tx sx" style="left:1268px;top:743px">K</div><div class="tx sx" style="left:1281px;top:743px">U16K16</div><div class="tx sx" style="left:1268px;top:756px">K</div><div class="tx sx" style="left:1281px;top:756px">U16K17</div><div class="tx sx" style="left:1268px;top:769px">K</div><div class="tx sx" style="left:1281px;top:769px">U16K18</div><div class="tx sx" style="left:1268px;top:782px">K</div><div class="tx sx" style="left:1281px;top:782px">U16K19</div><div class="tx sx" style="left:1268px;top:795px">K</div><div class="tx sx" style="left:1281px;top:795px">U16K20</div><div class="tx sx" style="left:1268px;top:808px">K</div><div class="tx sx" style="left:1281px;top:808px">U16K21</div><div class="tx sx" style="left:1268px;top:821px">K</div><div class="tx sx" style="left:1281px;top:821px">U16K22</div><div class="tx sx" style="left:1268px;top:834px">K</div><div class="tx sx" style="left:1281px;top:834px">U21K00</div><div class="tx sx" style="left:1268px;top:847px">K</div><div class="tx sx" style="left:1281px;top:847px">U21K01</div><div class="tx sx" style="left:1268px;top:860px">K</div><div class="tx sx" style="left:1281px;top:860px">U21K02</div><div class="tx sx" style="left:1268px;top:873px">K</div><div class="tx sx" style="left:1281px;top:873px">U21K03</div></div>
<div class="p12" style="color:#0050a0;--s:.91"><div class="tx sx" style="left:1339px;top:106px">K</div><div class="tx sx" style="left:1351px;top:106px">U21K04</div><div class="tx sx" style="left:1339px;top:119px">K</div><div class="tx sx" style="left:1351px;top:119px">U21K06</div><div class="tx sx" style="left:1339px;top:132px">K</div><div class="tx sx" style="left:1351px;top:132px">U21K07</div><div class="tx sx" style="left:1339px;top:145px">K</div><div class="tx sx" style="left:1351px;top:145px">U21K08</div><div class="tx sx" style="left:1339px;top:158px">K</div><div class="tx sx" style="left:1351px;top:158px">U21K09</div><div class="tx sx" style="left:1339px;top:171px">K</div><div class="tx sx" style="left:1351px;top:171px">U21K10</div><div class="tx sx" style="left:1339px;top:184px">K</div><div class="tx sx" style="left:1351px;top:184px">U21K11</div><div class="tx sx" style="left:1339px;top:197px">K</div><div class="tx sx" style="left:1351px;top:197px">U21K12</div><div class="tx sx" style="left:1339px;top:210px">K</div><div class="tx sx" style="left:1351px;top:210px">U21K13</div><div class="tx sx" style="left:1339px;top:223px">K</div><div class="tx sx" style="left:1351px;top:223px">U21K14</div><div class="tx sx" style="left:1339px;top:236px">K</div><div class="tx sx" style="left:1351px;top:236px">U21K15</div><div class="tx sx" style="left:1339px;top:249px">K</div><div class="tx sx" style="left:1351px;top:249px">U21K16</div><div class="tx sx" style="left:1339px;top:262px">K</div><div class="tx sx" style="left:1351px;top:262px">U21K17</div><div class="tx sx" style="left:1339px;top:275px">K</div><div class="tx sx" style="left:1351px;top:275px">U21K18</div><div class="tx sx" style="left:1339px;top:288px">K</div><div class="tx sx" style="left:1351px;top:288px">U21K19</div><div class="tx sx" style="left:1339px;top:301px">K</div><div class="tx sx" style="left:1351px;top:301px">U21K20</div><div class="tx sx" style="left:1339px;top:314px">K</div><div class="tx sx" style="left:1351px;top:314px">U21K21</div><div class="tx sx" style="left:1339px;top:327px">K</div><div class="tx sx" style="left:1351px;top:327px">U21K22</div><div class="tx sx" style="left:1339px;top:340px">K</div><div class="tx sx" style="left:1351px;top:340px">U21K23</div><div class="tx sx" style="left:1339px;top:353px">K</div><div class="tx sx" style="left:1351px;top:353px">U21K24</div><div class="tx sx" style="left:1339px;top:366px">K</div><div class="tx sx" style="left:1351px;top:366px">U21K25</div><div class="tx sx" style="left:1339px;top:379px">K</div><div class="tx sx" style="left:1351px;top:379px">U21K26</div><div class="tx sx" style="left:1339px;top:392px">K</div><div class="tx sx" style="left:1351px;top:392px">U21K27</div><div class="tx sx" style="left:1339px;top:405px">K</div><div class="tx sx" style="left:1351px;top:405px">U21K30</div><div class="tx sx" style="left:1339px;top:418px">K</div><div class="tx sx" style="left:1351px;top:418px">U22K02</div><div class="tx sx" style="left:1339px;top:431px">K</div><div class="tx sx" style="left:1351px;top:431px">U22K03</div><div class="tx sx" style="left:1339px;top:444px">K</div><div class="tx sx" style="left:1351px;top:444px">U22K04</div><div class="tx sx" style="left:1339px;top:457px">K</div><div class="tx sx" style="left:1351px;top:457px">U22K05</div><div class="tx sx" style="left:1339px;top:470px">K</div><div class="tx sx" style="left:1351px;top:470px">U22K06</div><div class="tx sx" style="left:1339px;top:483px">K</div><div class="tx sx" style="left:1351px;top:483px">U22K07</div><div class="tx sx" style="left:1339px;top:496px">K</div><div class="tx sx" style="left:1351px;top:496px">U22K08</div><div class="tx sx" style="left:1339px;top:509px">K</div><div class="tx sx" style="left:1351px;top:509px">U22K10</div><div class="abs sel" style="left:1338px;top:522px;width:71px;height:13px"></div><div class="tx sx" style="left:1339px;top:522px;color:#fff">K</div><div class="tx sx" style="left:1351px;top:522px;color:#fff">U22K11</div><div class="tx sx" style="left:1339px;top:535px">K</div><div class="tx sx" style="left:1351px;top:535px">W03K00</div><div class="tx sx" style="left:1339px;top:548px">K</div><div class="tx sx" style="left:1351px;top:548px">W04K00</div><div class="tx sx" style="left:1339px;top:561px">K</div><div class="tx sx" style="left:1351px;top:561px">W08K03</div><div class="tx sx" style="left:1339px;top:574px">K</div><div class="tx sx" style="left:1351px;top:574px">W11K01</div><div class="tx sx" style="left:1339px;top:587px">K</div><div class="tx sx" style="left:1351px;top:587px">W15K00</div><div class="tx sx" style="left:1339px;top:600px">K</div><div class="tx sx" style="left:1351px;top:600px">W15K03</div><div class="tx sx" style="left:1339px;top:613px">K</div><div class="tx sx" style="left:1351px;top:613px">W16K02</div><div class="tx sx" style="left:1339px;top:626px">K</div><div class="tx sx" style="left:1351px;top:626px">W17K00</div><div class="tx sx" style="left:1339px;top:639px">K</div><div class="tx sx" style="left:1351px;top:639px">W23K00</div><div class="tx sx" style="left:1339px;top:652px">K</div><div class="tx sx" style="left:1351px;top:652px">W23K01</div><div class="tx sx" style="left:1339px;top:665px">K</div><div class="tx sx" style="left:1351px;top:665px">W23K02</div><div class="tx sx" style="left:1339px;top:678px">K</div><div class="tx sx" style="left:1351px;top:678px">W23K03</div><div class="tx sx" style="left:1339px;top:691px">N</div><div class="tx sx" style="left:1351px;top:691px">I02N00</div><div class="tx sx" style="left:1339px;top:704px">N</div><div class="tx sx" style="left:1351px;top:704px">I02N01</div><div class="tx sx" style="left:1339px;top:717px">N</div><div class="tx sx" style="left:1351px;top:717px">I02N02</div><div class="tx sx" style="left:1339px;top:730px">N</div><div class="tx sx" style="left:1351px;top:730px">I02N03</div><div class="tx sx" style="left:1339px;top:743px">N</div><div class="tx sx" style="left:1351px;top:743px">I02N04</div><div class="tx sx" style="left:1339px;top:756px">N</div><div class="tx sx" style="left:1351px;top:756px">I02N05</div><div class="tx sx" style="left:1339px;top:769px">N</div><div class="tx sx" style="left:1351px;top:769px">I02N06</div><div class="tx sx" style="left:1339px;top:782px">N</div><div class="tx sx" style="left:1351px;top:782px">I02N07</div><div class="tx sx" style="left:1339px;top:795px">N</div><div class="tx sx" style="left:1351px;top:795px">I02N08</div><div class="tx sx" style="left:1339px;top:808px">N</div><div class="tx sx" style="left:1351px;top:808px">I02N09</div><div class="tx sx" style="left:1339px;top:821px">N</div><div class="tx sx" style="left:1351px;top:821px">I02N10</div><div class="tx sx" style="left:1339px;top:834px">N</div><div class="tx sx" style="left:1351px;top:834px">I02N11</div><div class="tx sx" style="left:1339px;top:847px">N</div><div class="tx sx" style="left:1351px;top:847px">I02N12</div><div class="tx sx" style="left:1339px;top:860px">N</div><div class="tx sx" style="left:1351px;top:860px">U15N07</div><div class="tx sx" style="left:1339px;top:873px">N</div><div class="tx sx" style="left:1351px;top:873px">U15N24</div></div>
<div class="p12" style="color:#0050a0;--s:.91"><div class="tx sx" style="left:1410px;top:106px">N</div><div class="tx sx" style="left:1422px;top:106px">W01N00</div><div class="tx sx" style="left:1410px;top:119px">N</div><div class="tx sx" style="left:1422px;top:119px">W11N00</div><div class="tx sx" style="left:1410px;top:132px">N</div><div class="tx sx" style="left:1422px;top:132px">W11N01</div><div class="tx sx" style="left:1410px;top:145px">N</div><div class="tx sx" style="left:1422px;top:145px">W11N02</div><div class="tx sx" style="left:1410px;top:158px">N</div><div class="tx sx" style="left:1422px;top:158px">W11N03</div><div class="tx sx" style="left:1410px;top:171px">N</div><div class="tx sx" style="left:1422px;top:171px">W12N00</div><div class="tx sx" style="left:1410px;top:184px">N</div><div class="tx sx" style="left:1422px;top:184px">W12N01</div><div class="tx sx" style="left:1410px;top:197px">N</div><div class="tx sx" style="left:1422px;top:197px">W12N02</div><div class="tx sx" style="left:1410px;top:210px">N</div><div class="tx sx" style="left:1422px;top:210px">W12N03</div><div class="tx sx" style="left:1410px;top:223px">N</div><div class="tx sx" style="left:1422px;top:223px">W13N00</div><div class="tx sx" style="left:1410px;top:236px">N</div><div class="tx sx" style="left:1422px;top:236px">W13N01</div><div class="tx sx" style="left:1410px;top:249px">N</div><div class="tx sx" style="left:1422px;top:249px">W13N02</div><div class="tx sx" style="left:1410px;top:262px">N</div><div class="tx sx" style="left:1422px;top:262px">W13N03</div><div class="tx sx" style="left:1410px;top:275px">N</div><div class="tx sx" style="left:1422px;top:275px">W14N00</div><div class="tx sx" style="left:1410px;top:288px">N</div><div class="tx sx" style="left:1422px;top:288px">W14N01</div><div class="tx sx" style="left:1410px;top:301px">N</div><div class="tx sx" style="left:1422px;top:301px">W14N02</div><div class="tx sx" style="left:1410px;top:314px">N</div><div class="tx sx" style="left:1422px;top:314px">W14N03</div><div class="tx sx" style="left:1410px;top:327px">N</div><div class="tx sx" style="left:1422px;top:327px">W15N00</div><div class="tx sx" style="left:1410px;top:340px">N</div><div class="tx sx" style="left:1422px;top:340px">W15N02</div><div class="tx sx" style="left:1410px;top:353px">T</div><div class="tx sx" style="left:1422px;top:353px">U01T08</div><div class="tx sx" style="left:1410px;top:366px">T</div><div class="tx sx" style="left:1422px;top:366px">U15T31</div><div class="tx sx" style="left:1410px;top:379px">T</div><div class="tx sx" style="left:1422px;top:379px">W00T00</div><div class="tx sx" style="left:1410px;top:392px">T</div><div class="tx sx" style="left:1422px;top:392px">W00T01</div><div class="tx sx" style="left:1410px;top:405px">T</div><div class="tx sx" style="left:1422px;top:405px">W00T02</div><div class="tx sx" style="left:1410px;top:418px">T</div><div class="tx sx" style="left:1422px;top:418px">W00T03</div></div>
<div class="abs" style="left:1489px;top:103px;width:241px;height:785px;background:#fff"></div>
<div class="p12" style="--s:.875"><div class="tx sx" style="left:1535px;top:110.5px">32IN</div><div class="tx sx" style="left:1492.7px;top:125.5px">I00A00</div><div class="tx sx" style="left:1556.4px;top:132.5px">I00A16</div><div class="tx sx" style="left:1492.7px;top:139.5px">I00A01</div><div class="tx sx" style="left:1556.4px;top:146.5px">I00A17</div><div class="tx sx" style="left:1492.7px;top:153.5px">I00A02</div><div class="tx sx" style="left:1556.4px;top:160.5px">I00A18</div><div class="tx sx" style="left:1492.7px;top:167.5px">I00A03</div><div class="tx sx" style="left:1556.4px;top:174.5px">I00A19</div><div class="tx sx" style="left:1492.7px;top:181.5px">I00A04</div><div class="tx sx" style="left:1556.4px;top:188.5px">I00A20</div><div class="tx sx" style="left:1492.7px;top:195.5px">I00A05</div><div class="tx sx" style="left:1556.4px;top:202.5px">I00A21</div><div class="tx sx" style="left:1492.7px;top:209.5px">I00A06</div><div class="tx sx" style="left:1556.4px;top:216.5px">I00A22</div><div class="tx sx" style="left:1492.7px;top:223.5px">I00A07</div><div class="tx sx" style="left:1556.4px;top:230.5px">I00A23</div><div class="tx sx" style="left:1492.7px;top:237.5px">I00A08</div><div class="tx sx" style="left:1556.4px;top:244.5px">I00A24</div><div class="tx sx" style="left:1492.7px;top:251.5px">I00A09</div><div class="tx sx" style="left:1556.4px;top:258.5px">I00A25</div><div class="tx sx" style="left:1492.7px;top:265.5px">I00A10</div><div class="tx sx" style="left:1556.4px;top:272.5px">I00A26</div><div class="tx sx" style="left:1492.7px;top:279.5px">I00A11</div><div class="tx sx" style="left:1556.4px;top:286.5px">I00A27</div><div class="tx sx" style="left:1492.7px;top:293.5px">I00A12</div><div class="tx sx" style="left:1556.4px;top:300.5px">I00A28</div><div class="tx sx" style="left:1492.7px;top:307.5px">I00A13</div><div class="tx sx" style="left:1556.4px;top:314.5px">I00A29</div><div class="tx sx" style="left:1492.7px;top:321.5px">I00A14</div><div class="tx sx" style="left:1556.4px;top:328.5px">I00A30</div><div class="tx sx" style="left:1492.7px;top:335.5px">I00A15</div><div class="tx sx" style="left:1556.4px;top:342.5px">I00A31</div><div class="tx sx" style="left:1650px;top:110.5px">16IN</div><div class="tx sx" style="left:1607.7px;top:125.5px">I01A00</div><div class="tx sx" style="left:1607.7px;top:139.5px">I01A01</div><div class="tx sx" style="left:1607.7px;top:153.5px">I01A02</div><div class="tx sx" style="left:1607.7px;top:167.5px">I01A03</div><div class="tx sx" style="left:1607.7px;top:181.5px">I01A04</div><div class="tx sx" style="left:1607.7px;top:195.5px">I01A05</div><div class="tx sx" style="left:1607.7px;top:209.5px">I01A06</div><div class="tx sx" style="left:1607.7px;top:223.5px">I01A07</div><div class="tx sx" style="left:1607.7px;top:237.5px">I01A08</div><div class="tx sx" style="left:1607.7px;top:251.5px">I01A09</div><div class="tx sx" style="left:1607.7px;top:265.5px">I01A10</div><div class="tx sx" style="left:1607.7px;top:279.5px">I01A11</div><div class="tx sx" style="left:1607.7px;top:293.5px">I01A12</div><div class="tx sx" style="left:1607.7px;top:307.5px">I01A13</div><div class="tx sx" style="left:1607.7px;top:321.5px">I01A14</div><div class="tx sx" style="left:1607.7px;top:335.5px">I01A15</div><div class="tx sx" style="left:1535px;top:420.5px">24OUT</div><div class="tx sx" style="left:1492.8px;top:435.5px">U04A23</div><div class="tx sx" style="left:1492.8px;top:449.5px">U04A11</div><div class="tx sx" style="left:1492.8px;top:463.5px">U04A10</div><div class="tx sx" style="left:1492.8px;top:477.5px">U04A09</div><div class="tx sx" style="left:1492.8px;top:491.5px">U04A08</div><div class="tx sx" style="left:1492.8px;top:505.5px">U04A07</div><div class="tx sx" style="left:1492.8px;top:519.5px">U04A06</div><div class="tx sx" style="left:1492.8px;top:533.5px">U04A05</div><div class="tx sx" style="left:1492.8px;top:547.5px">U04A04</div><div class="tx sx" style="left:1492.8px;top:561.5px">U04A03</div><div class="tx sx" style="left:1492.8px;top:575.5px">U04A02</div><div class="tx sx" style="left:1492.8px;top:589.5px">U04A01</div><div class="tx sx" style="left:1492.8px;top:603.5px">U04A00</div><div class="tx sx" style="left:1556.4px;top:456.5px">U04A22</div><div class="tx sx" style="left:1556.4px;top:470.5px">U04A21</div><div class="tx sx" style="left:1556.4px;top:484.5px">U04A20</div><div class="tx sx" style="left:1556.4px;top:498.5px">U04A19</div><div class="tx sx" style="left:1556.4px;top:512.5px">U04A18</div><div class="tx sx" style="left:1556.4px;top:526.5px">U04A17</div><div class="tx sx" style="left:1556.4px;top:540.5px">U04A16</div><div class="tx sx" style="left:1556.4px;top:554.5px">U04A15</div><div class="tx sx" style="left:1556.4px;top:568.5px">U04A14</div><div class="tx sx" style="left:1556.4px;top:582.5px">U04A13</div><div class="tx sx" style="left:1556.4px;top:596.5px">U04A12</div><div class="tx sx" style="left:1650px;top:420.5px">8OUT</div><div class="tx sx" style="left:1607.8px;top:505.5px">U04A31</div><div class="tx sx" style="left:1607.8px;top:519.5px">U04A30</div><div class="tx sx" style="left:1607.8px;top:533.5px">U04A29</div><div class="tx sx" style="left:1607.8px;top:547.5px">U04A28</div><div class="tx sx" style="left:1607.8px;top:561.5px">U04A27</div><div class="tx sx" style="left:1607.8px;top:575.5px">U04A26</div><div class="tx sx" style="left:1607.8px;top:589.5px">U04A25</div><div class="tx sx" style="left:1607.8px;top:603.5px">U04A24</div></div>
<svg class="abs" style="left:0;top:0" width="1737" height="919" viewBox="0 0 1737 919"><rect x="1534.5" y="127.5" width="7" height="7" fill="#fff" stroke="#000" shape-rendering="crispEdges"/><circle cx="1548" cy="138" r="3.5" fill="#fff" stroke="#000"/><circle cx="1538" cy="145" r="3.5" fill="#fff" stroke="#000"/><circle cx="1548" cy="152" r="3.5" fill="#fff" stroke="#000"/><circle cx="1538" cy="159" r="3.5" fill="#fff" stroke="#000"/><circle cx="1548" cy="166" r="3.5" fill="#fff" stroke="#000"/><circle cx="1538" cy="173" r="3.5" fill="#fff" stroke="#000"/><circle cx="1548" cy="180" r="3.5" fill="#fff" stroke="#000"/><circle cx="1538" cy="187" r="3.5" fill="#fff" stroke="#000"/><circle cx="1548" cy="194" r="3.5" fill="#fff" stroke="#000"/><circle cx="1538" cy="201" r="3.5" fill="#fff" stroke="#000"/><circle cx="1548" cy="208" r="3.5" fill="#fff" stroke="#000"/><circle cx="1538" cy="215" r="3.5" fill="#fff" stroke="#000"/><circle cx="1548" cy="222" r="3.5" fill="#fff" stroke="#000"/><circle cx="1538" cy="229" r="3.5" fill="#fff" stroke="#000"/><circle cx="1548" cy="236" r="3.5" fill="#fff" stroke="#000"/><circle cx="1538" cy="243" r="3.5" fill="#3a3aee" stroke="#1c1ca8"/><circle cx="1548" cy="250" r="3.5" fill="#fff" stroke="#000"/><circle cx="1538" cy="257" r="3.5" fill="#3a3aee" stroke="#1c1ca8"/><circle cx="1548" cy="264" r="3.5" fill="#fff" stroke="#000"/><circle cx="1538" cy="271" r="3.5" fill="#3a3aee" stroke="#1c1ca8"/><circle cx="1548" cy="278" r="3.5" fill="#fff" stroke="#000"/><circle cx="1538" cy="285" r="3.5" fill="#3a3aee" stroke="#1c1ca8"/><circle cx="1548" cy="292" r="3.5" fill="#fff" stroke="#000"/><circle cx="1538" cy="299" r="3.5" fill="#3a3aee" stroke="#1c1ca8"/><circle cx="1548" cy="306" r="3.5" fill="#fff" stroke="#000"/><circle cx="1538" cy="313" r="3.5" fill="#3a3aee" stroke="#1c1ca8"/><circle cx="1548" cy="320" r="3.5" fill="#fff" stroke="#000"/><circle cx="1538" cy="327" r="3.5" fill="#3a3aee" stroke="#1c1ca8"/><circle cx="1548" cy="334" r="3.5" fill="#fff" stroke="#000"/><circle cx="1538" cy="341" r="3.5" fill="#3a3aee" stroke="#1c1ca8"/><circle cx="1548" cy="348" r="3.5" fill="#fff" stroke="#000"/><circle cx="1538" cy="355" r="3.4" fill="#000" stroke="#000"/><circle cx="1538" cy="369" r="3.4" fill="#000" stroke="#000"/><circle cx="1538" cy="383" r="3.4" fill="#000" stroke="#000"/><circle cx="1548" cy="362" r="3.4" fill="#000" stroke="#000"/><circle cx="1548" cy="376" r="3.4" fill="#000" stroke="#000"/><rect x="1672" y="139" width="3" height="1" fill="#000" shape-rendering="crispEdges"/><rect x="1649.5" y="127.5" width="7" height="7" fill="#fff" stroke="#000" shape-rendering="crispEdges"/><circle cx="1663" cy="138" r="3.5" fill="#fff" stroke="#000"/><rect x="1672" y="153" width="3" height="1" fill="#000" shape-rendering="crispEdges"/><circle cx="1653" cy="145" r="3.5" fill="#fff" stroke="#000"/><circle cx="1663" cy="152" r="3.5" fill="#fff" stroke="#000"/><rect x="1672" y="167" width="3" height="1" fill="#000" shape-rendering="crispEdges"/><circle cx="1653" cy="159" r="3.5" fill="#fff" stroke="#000"/><circle cx="1663" cy="166" r="3.5" fill="#fff" stroke="#000"/><rect x="1672" y="181" width="3" height="1" fill="#000" shape-rendering="crispEdges"/><circle cx="1653" cy="173" r="3.5" fill="#fff" stroke="#000"/><circle cx="1663" cy="180" r="3.5" fill="#fff" stroke="#000"/><rect x="1672" y="195" width="3" height="1" fill="#000" shape-rendering="crispEdges"/><circle cx="1653" cy="187" r="3.5" fill="#fff" stroke="#000"/><circle cx="1663" cy="194" r="3.5" fill="#fff" stroke="#000"/><rect x="1672" y="209" width="3" height="1" fill="#000" shape-rendering="crispEdges"/><circle cx="1653" cy="201" r="3.5" fill="#fff" stroke="#000"/><circle cx="1663" cy="208" r="3.5" fill="#fff" stroke="#000"/><rect x="1672" y="223" width="3" height="1" fill="#000" shape-rendering="crispEdges"/><circle cx="1653" cy="215" r="3.5" fill="#fff" stroke="#000"/><circle cx="1663" cy="222" r="3.5" fill="#fff" stroke="#000"/><rect x="1672" y="237" width="3" height="1" fill="#000" shape-rendering="crispEdges"/><circle cx="1653" cy="229" r="3.5" fill="#fff" stroke="#000"/><circle cx="1663" cy="236" r="3.5" fill="#fff" stroke="#000"/><rect x="1672" y="251" width="3" height="1" fill="#000" shape-rendering="crispEdges"/><circle cx="1653" cy="243" r="3.5" fill="#fff" stroke="#000"/><circle cx="1663" cy="250" r="3.5" fill="#fff" stroke="#000"/><rect x="1672" y="265" width="3" height="1" fill="#000" shape-rendering="crispEdges"/><circle cx="1653" cy="257" r="3.5" fill="#fff" stroke="#000"/><circle cx="1663" cy="264" r="3.5" fill="#fff" stroke="#000"/><rect x="1672" y="279" width="3" height="1" fill="#000" shape-rendering="crispEdges"/><circle cx="1653" cy="271" r="3.5" fill="#fff" stroke="#000"/><circle cx="1663" cy="278" r="3.5" fill="#fff" stroke="#000"/><rect x="1672" y="293" width="3" height="1" fill="#000" shape-rendering="crispEdges"/><circle cx="1653" cy="285" r="3.5" fill="#fff" stroke="#000"/><circle cx="1663" cy="292" r="3.5" fill="#fff" stroke="#000"/><rect x="1672" y="307" width="3" height="1" fill="#000" shape-rendering="crispEdges"/><circle cx="1653" cy="299" r="3.5" fill="#fff" stroke="#000"/><circle cx="1663" cy="306" r="3.5" fill="#fff" stroke="#000"/><rect x="1672" y="321" width="3" height="1" fill="#000" shape-rendering="crispEdges"/><circle cx="1653" cy="313" r="3.5" fill="#fff" stroke="#000"/><circle cx="1663" cy="320" r="3.5" fill="#fff" stroke="#000"/><rect x="1672" y="335" width="3" height="1" fill="#000" shape-rendering="crispEdges"/><circle cx="1653" cy="327" r="3.5" fill="#fff" stroke="#000"/><circle cx="1663" cy="334" r="3.5" fill="#fff" stroke="#000"/><rect x="1672" y="349" width="3" height="1" fill="#000" shape-rendering="crispEdges"/><circle cx="1653" cy="341" r="3.5" fill="#fff" stroke="#000"/><circle cx="1663" cy="348" r="3.5" fill="#fff" stroke="#000"/><circle cx="1653" cy="355" r="3.4" fill="#000" stroke="#000"/><circle cx="1653" cy="369" r="3.4" fill="#000" stroke="#000"/><circle cx="1653" cy="383" r="3.4" fill="#000" stroke="#000"/><circle cx="1663" cy="362" r="3.4" fill="#000" stroke="#000"/><circle cx="1663" cy="376" r="3.4" fill="#000" stroke="#000"/><circle cx="1539" cy="442" r="4.5" fill="#fff" stroke="#000"/><circle cx="1539" cy="456" r="4.5" fill="#fff" stroke="#000"/><circle cx="1539" cy="470" r="4.5" fill="#fff" stroke="#000"/><circle cx="1539" cy="484" r="4.5" fill="#fff" stroke="#000"/><circle cx="1539" cy="498" r="4.5" fill="#fff" stroke="#000"/><circle cx="1539" cy="512" r="4.5" fill="#3a3aee" stroke="#1c1ca8"/><circle cx="1539" cy="526" r="4.5" fill="#3a3aee" stroke="#1c1ca8"/><circle cx="1539" cy="540" r="4.5" fill="#3a3aee" stroke="#1c1ca8"/><circle cx="1539" cy="554" r="4.5" fill="#3a3aee" stroke="#1c1ca8"/><circle cx="1539" cy="568" r="4.5" fill="#3a3aee" stroke="#1c1ca8"/><circle cx="1539" cy="582" r="4.5" fill="#3a3aee" stroke="#1c1ca8"/><circle cx="1539" cy="596" r="4.5" fill="#3a3aee" stroke="#1c1ca8"/><rect x="1534.5" y="605.5" width="9" height="9" fill="#3a3aee" stroke="#1c1ca8" shape-rendering="crispEdges"/><circle cx="1549" cy="449" r="4.5" fill="#d40000" stroke="#600000"/><circle cx="1549" cy="463" r="4.5" fill="#fff" stroke="#000"/><circle cx="1549" cy="477" r="4.5" fill="#fff" stroke="#000"/><circle cx="1549" cy="491" r="4.5" fill="#fff" stroke="#000"/><circle cx="1549" cy="505" r="4.5" fill="#fff" stroke="#000"/><circle cx="1549" cy="519" r="4.5" fill="#fff" stroke="#000"/><circle cx="1549" cy="533" r="4.5" fill="#fff" stroke="#000"/><circle cx="1549" cy="547" r="4.5" fill="#fff" stroke="#000"/><circle cx="1549" cy="561" r="4.5" fill="#fff" stroke="#000"/><circle cx="1549" cy="575" r="4.5" fill="#fff" stroke="#000"/><circle cx="1549" cy="589" r="4.5" fill="#fff" stroke="#000"/><circle cx="1549" cy="603" r="4.5" fill="#fff" stroke="#000"/><rect x="1608" y="442" width="3" height="1" fill="#000" shape-rendering="crispEdges"/><circle cx="1654" cy="442" r="4.5" fill="#fff" stroke="#000"/><rect x="1608" y="456" width="3" height="1" fill="#000" shape-rendering="crispEdges"/><circle cx="1654" cy="456" r="4.5" fill="#fff" stroke="#000"/><rect x="1608" y="470" width="3" height="1" fill="#000" shape-rendering="crispEdges"/><circle cx="1654" cy="470" r="4.5" fill="#fff" stroke="#000"/><rect x="1608" y="484" width="3" height="1" fill="#000" shape-rendering="crispEdges"/><circle cx="1654" cy="484" r="4.5" fill="#fff" stroke="#000"/><circle cx="1654" cy="498" r="4.5" fill="#fff" stroke="#000"/><circle cx="1654" cy="512" r="4.5" fill="#fff" stroke="#000"/><circle cx="1654" cy="526" r="4.5" fill="#fff" stroke="#000"/><circle cx="1654" cy="540" r="4.5" fill="#fff" stroke="#000"/><circle cx="1654" cy="554" r="4.5" fill="#fff" stroke="#000"/><circle cx="1654" cy="568" r="4.5" fill="#fff" stroke="#000"/><circle cx="1654" cy="582" r="4.5" fill="#fff" stroke="#000"/><circle cx="1654" cy="596" r="4.5" fill="#fff" stroke="#000"/><rect x="1649.5" y="605.5" width="9" height="9" fill="#fff" stroke="#000" shape-rendering="crispEdges"/><circle cx="1664" cy="449" r="4.5" fill="#d40000" stroke="#600000"/><circle cx="1664" cy="463" r="4.5" fill="#fff" stroke="#000"/><rect x="1672" y="464" width="3" height="1" fill="#000" shape-rendering="crispEdges"/><circle cx="1664" cy="477" r="4.5" fill="#fff" stroke="#000"/><rect x="1672" y="478" width="3" height="1" fill="#000" shape-rendering="crispEdges"/><circle cx="1664" cy="491" r="4.5" fill="#fff" stroke="#000"/><rect x="1672" y="492" width="3" height="1" fill="#000" shape-rendering="crispEdges"/><circle cx="1664" cy="505" r="4.5" fill="#fff" stroke="#000"/><rect x="1672" y="506" width="3" height="1" fill="#000" shape-rendering="crispEdges"/><circle cx="1664" cy="519" r="4.5" fill="#fff" stroke="#000"/><rect x="1672" y="520" width="3" height="1" fill="#000" shape-rendering="crispEdges"/><circle cx="1664" cy="533" r="4.5" fill="#fff" stroke="#000"/><rect x="1672" y="534" width="3" height="1" fill="#000" shape-rendering="crispEdges"/><circle cx="1664" cy="547" r="4.5" fill="#fff" stroke="#000"/><rect x="1672" y="548" width="3" height="1" fill="#000" shape-rendering="crispEdges"/><circle cx="1664" cy="561" r="4.5" fill="#fff" stroke="#000"/><rect x="1672" y="562" width="3" height="1" fill="#000" shape-rendering="crispEdges"/><circle cx="1664" cy="575" r="4.5" fill="#fff" stroke="#000"/><rect x="1672" y="576" width="3" height="1" fill="#000" shape-rendering="crispEdges"/><circle cx="1664" cy="589" r="4.5" fill="#fff" stroke="#000"/><rect x="1672" y="590" width="3" height="1" fill="#000" shape-rendering="crispEdges"/><circle cx="1664" cy="603" r="4.5" fill="#fff" stroke="#000"/><rect x="1672" y="604" width="3" height="1" fill="#000" shape-rendering="crispEdges"/></svg>
<div class="tx p12 lk" style="left:10.7px;top:896px;"><span id="K0" class="sx" style="--s:0.9366">Ф. хар.</span></div>
<div class="tx p12 lk" style="left:58.4px;top:896px;"><span id="K1" class="sx" style="--s:0.9246">PLC - пакеты, сигналы, разъемы</span></div>
<div class="tx p12 lk" style="left:240.6px;top:896px;"><span id="K2" class="sx" style="--s:0.8860">PLC - Основы</span></div>
<div class="tx p12 lk" style="left:320.4px;top:896px;"><span id="K3" class="sx" style="--s:0.8958">PLC - Таймеры</span></div>
<div class="tx p12 lk" style="left:402.4px;top:896px;"><span id="K4" class="sx" style="--s:0.8763">PLC - Счетчики</span></div>
<div class="tx p12 lk" style="left:490.1px;top:896px;"><span id="K5" class="sx" style="--s:0.8889">PLC - Одновибраторы</span></div>
<div class="tx p12 lk" style="left:610.2px;top:896px;"><span id="K6" class="sx" style="--s:0.9113">PLC - Условные операторы</span></div>
<div class="tx p12 lk" style="left:754.4px;top:896px;"><span id="K7" class="sx" style="--s:0.8883">PLC - Операторы</span></div>
<div class="tx p12 lk" style="left:850px;top:896px;"><span id="K8" class="sx" style="--s:0.9410">Коннекторы</span></div>
<div class="tx p12 lk" style="left:922.5px;top:896px;"><span id="K9" class="sx" style="--s:0.8924">Kinco</span></div>
<div class="btn" style="left:1107px;top:892px;width:16px;height:24px;overflow:hidden"><div class="tx p12" style="left:0;top:4px"><span class="sx" style="--s:.93;text-decoration:underline">ıtto</span></div></div>
<div class="btn" style="left:1155px;top:892px;width:16px;height:24px;overflow:hidden"><div class="tx p12" style="left:0;top:4px"><span class="sx" style="--s:.93;text-decoration:underline">ıtto</span></div></div>
<div class="abs" style="left:1210px;top:826px;font-size:19.9px;line-height:24px;color:rgba(128,128,128,.5);white-space:pre;z-index:20">Активация Windows</div>
<div class="abs" style="left:1210px;top:853px;font-size:15.03px;line-height:18px;color:rgba(128,128,128,.55);white-space:pre;z-index:20">Чтобы активировать Windows, перейдите в раздел "Параметры".</div>
<div id="frame">
<div class="abs" style="left:0;top:0;width:1737px;height:1px;background:#2e6ca6"></div>
<div class="abs" style="left:0;top:0;width:1px;height:918px;background:#2e70a8"></div>
<div class="abs" style="left:1px;top:31px;width:2px;height:884px;background:#f6ffff"></div>
<div class="abs" style="left:1734px;top:31px;width:2px;height:861px;background:#f6ffff"></div>
<div class="abs" style="left:1734px;top:892px;width:2px;height:24px;background:#a0a0a0"></div>
<div class="abs" style="left:1735.6px;top:0;width:1.4px;height:918px;background:#1b6fc8"></div>
<div class="abs" style="left:1px;top:915px;width:1735px;height:1px;background:#b4b8bc"></div>
<div class="abs" style="left:0;top:916px;width:1737px;height:1px;background:#86acd0"></div>
<div class="abs" style="left:0;top:917px;width:1737px;height:1px;background:#3c78b0"></div>
<div class="abs" style="left:0;top:918px;width:1737px;height:1px;background:#fff"></div>
</div>
</body></html>
